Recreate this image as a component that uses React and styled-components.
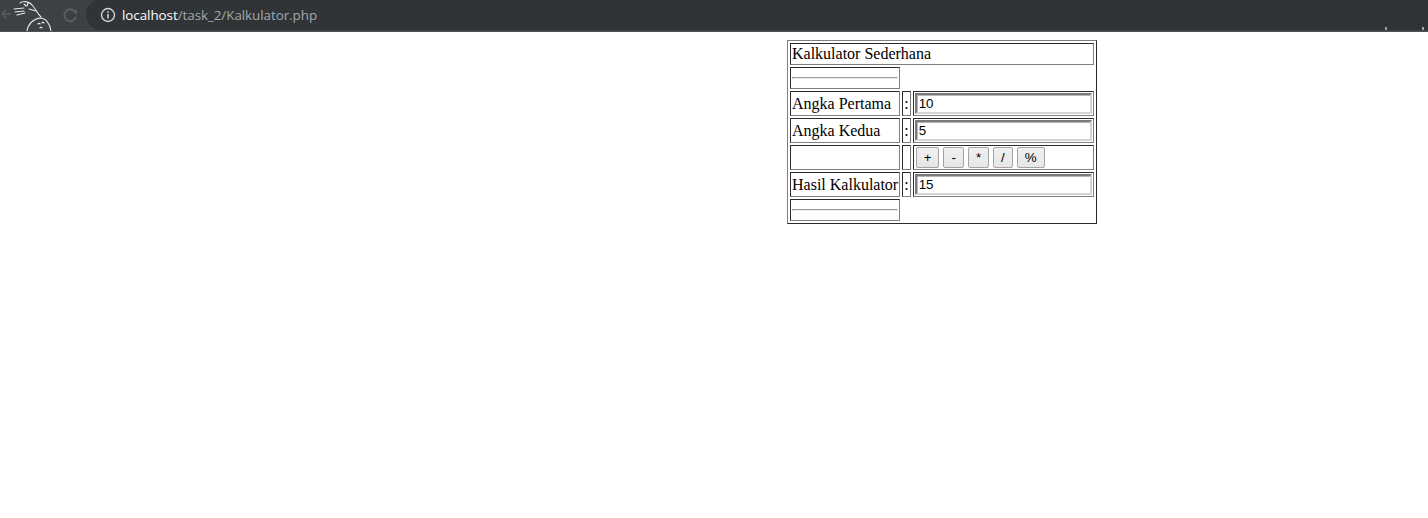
import React from "react";
import styled, { createGlobalStyle } from "styled-components";

const Global = createGlobalStyle`
  html, body { margin: 0; padding: 0; background: #ffffff; }
  body { font-family: "Liberation Serif", "Times New Roman", serif; font-size: 16px; color: #000; }
`;

const Toolbar = styled.header`
  height: 31px;
  background: #3c4144;
  border-bottom: 1px solid #4d5255;
  display: flex;
  align-items: center;
  position: relative;
  overflow: hidden;
`;

const Art = styled.svg`
  width: 60px;
  height: 31px;
  flex: none;
`;

const NavIcon = styled.svg`
  width: 20px;
  height: 20px;
  flex: none;
  margin-left: ${(p) => p.$ml}px;
`;

const Omnibox = styled.div`
  margin-left: 6px;
  height: 31px;
  flex: 1;
  background: #303437;
  border-radius: 16px 0 0 16px;
  display: flex;
  align-items: center;
  padding-left: 14px;
  gap: 6px;
  font-family: "Open Sans", "Noto Sans", sans-serif;
  font-size: 13.4px;
  margin-top: -2px;
`;

const Host = styled.span`
  color: #ffffff;
`;

const Path = styled.span`
  color: #a4a8ab;
`;

const Url = styled.div`
  letter-spacing: -0.05px;
`;

const Page = styled.main`
  padding: 8px 0 8px 787px;
`;

const Table = styled.table`
  border: 1px outset #808080;
  border-spacing: 2px;
  border-collapse: separate;
  font-family: "Liberation Serif", "Times New Roman", serif;
  font-size: 16px;
`;

const Cell = styled.td`
  border: 1px inset #808080;
  padding: 1px;
  line-height: 18px;
  white-space: nowrap;
  color: #000;
`;

const Rule = styled.hr`
  margin: 8px 0;
  border-style: solid;
  border-width: 1px;
  border-color: #9a9a9a #eeeeee #eeeeee #9a9a9a;
  height: 0;
`;

const Field = styled.input`
  box-sizing: border-box;
  display: block;
  width: 177px;
  height: 21px;
  margin: 0;
  padding: 1px 2px;
  border-style: solid;
  border-width: 2px;
  border-color: #7a7a7a #d4d4d4 #d4d4d4 #7a7a7a;
  box-shadow: inset 1px 1px 0 #b5b5b5;
  font-family: "Liberation Sans", Arial, sans-serif;
  font-size: 13.33px;
  color: #000;
  background: #fff;
  outline: none;
`;

const Buttons = styled.div`
  display: flex;
  gap: 4px;
  padding-left: 1px;
`;

const OpButton = styled.button`
  box-sizing: border-box;
  height: 21px;
  margin: 0;
  padding: 1px 7px;
  border: 1px solid #a3a3a3;
  border-radius: 2px;
  background: linear-gradient(#f0f0f0, #e6e6e6);
  font-family: "Liberation Sans", Arial, sans-serif;
  font-size: 13.33px;
  color: #000;
  line-height: 15px;
`;

const Mark = styled.span`
  position: absolute;
  bottom: 1px;
  left: ${(p) => p.$x}px;
  width: 2px;
  height: 3px;
  background: #9aa3a6;
`;

function Chrome() {
  return (
    <Toolbar>
      <Art viewBox="0 0 60 31">
        <path d="M2 14 L11 14 M2 14 L6 10 M2 14 L6 18" stroke="#55595c" strokeWidth="2" fill="none" />
        <g stroke="#e6e8e8" strokeWidth="1.1" fill="none" strokeLinecap="round">
          <path d="M20 3 C24 0 30 2 33 6 C36 10 38 14 41 17" />
          <path d="M24 4 L26 6 M28 3 L27 6" />
          <path d="M14 9 L24 8 M15 12 L24 11 M17 15 L25 13" />
          <path d="M29 9 L36 11" />
          <path d="M27 31 C28 24 33 19 40 18 C46 18 50 24 51 31" />
          <path d="M38 24 C38 23 40 23 40 24 M42 23 C42 22 44 22 44 23 M40 28 C40 27 42 27 42 28" />
        </g>
      </Art>
      <NavIcon viewBox="0 0 20 20" $ml={0}>
        <path d="M15 5.5 A6 6 0 1 0 16 11" stroke="#5a5e61" strokeWidth="2" fill="none" />
        <path d="M12 4 L17 4 L17 9 Z" fill="#5a5e61" />
      </NavIcon>
      <Omnibox>
        <svg width="16" height="16" viewBox="0 0 16 16">
          <circle cx="8" cy="8" r="6.5" stroke="#d0d2d3" strokeWidth="1.4" fill="none" />
          <rect x="7.2" y="7" width="1.6" height="4.5" fill="#d0d2d3" />
          <rect x="7.2" y="4.3" width="1.6" height="1.6" fill="#d0d2d3" />
        </svg>
        <Url>
          <Host>localhost</Host>
          <Path>/task_2/Kalkulator.php</Path>
        </Url>
      </Omnibox>
      <Mark $x={1385} />
      <Mark $x={1422} />
    </Toolbar>
  );
}

const rows = [
  { label: "Angka Pertama", value: "10" },
  { label: "Angka Kedua", value: "5" },
];

export default function App() {
  return (
    <>
      <Global />
      <Chrome />
      <Page>
        <Table>
          <tbody>
            <tr>
              <Cell colSpan={3}>Kalkulator Sederhana</Cell>
            </tr>
            <tr>
              <Cell><Rule /></Cell>
            </tr>
            {rows.map((r) => (
              <tr key={r.label}>
                <Cell>{r.label}</Cell>
                <Cell>:</Cell>
                <Cell><Field type="text" defaultValue={r.value} /></Cell>
              </tr>
            ))}
            <tr>
              <Cell />
              <Cell />
              <Cell>
                <Buttons>
                  {["+", "-", "*", "/", "%"].map((op) => (
                    <OpButton key={op}>{op}</OpButton>
                  ))}
                </Buttons>
              </Cell>
            </tr>
            <tr>
              <Cell>Hasil Kalkulator</Cell>
              <Cell>:</Cell>
              <Cell><Field type="text" defaultValue="15" /></Cell>
            </tr>
            <tr>
              <Cell><Rule /></Cell>
            </tr>
          </tbody>
        </Table>
      </Page>
    </>
  );
}
